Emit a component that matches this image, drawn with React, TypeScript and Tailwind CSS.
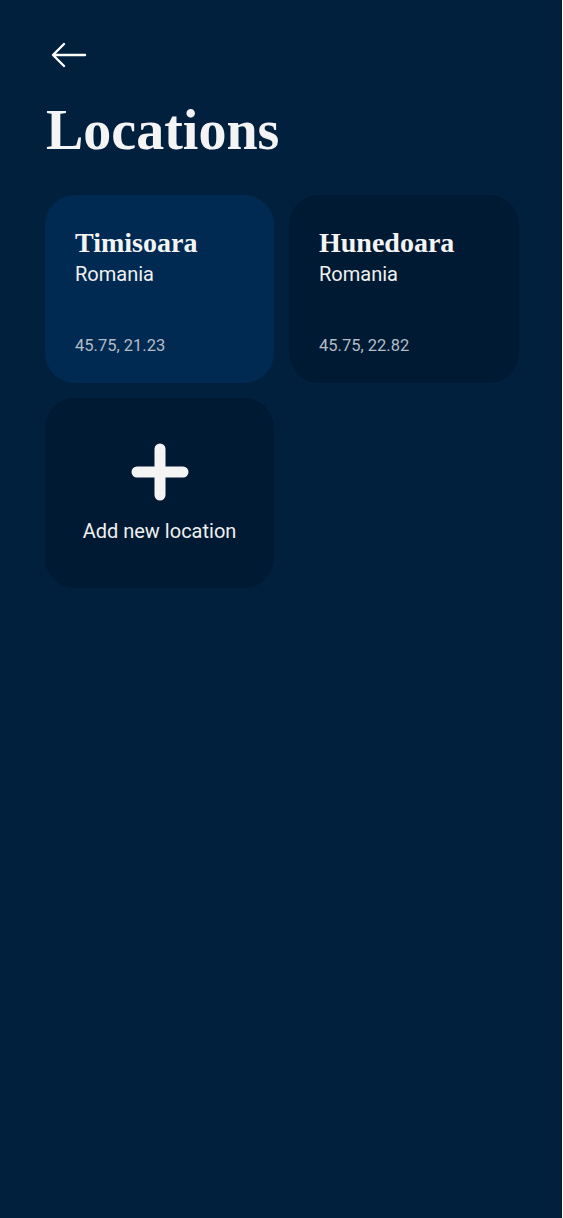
import React from "react";

type Place = {
  city: string;
  country: string;
  coords: string;
  active?: boolean;
};

const places: Place[] = [
  { city: "Timisoara", country: "Romania", coords: "45.75, 21.23", active: true },
  { city: "Hunedoara", country: "Romania", coords: "45.75, 22.82" },
];

const serif = "font-['Liberation_Serif',serif]";
const sans = "font-['Roboto','Noto_Sans',sans-serif]";

function BackArrow() {
  return (
    <svg width="36" height="26" viewBox="0 0 36 26" fill="none">
      <path
        d="M34 13H3M13 2L2 13l11 11"
        stroke="#ffffff"
        strokeWidth="2.4"
        strokeLinecap="round"
        strokeLinejoin="round"
      />
    </svg>
  );
}

function PlaceCard({ place }: { place: Place }) {
  return (
    <div
      className={
        "h-[188px] rounded-[30px] px-[30px] pt-[31px] pb-[27px] flex flex-col " +
        (place.active ? "bg-[#002a52]" : "bg-[#001a33]")
      }
    >
      <div className={`${serif} font-bold text-[28px] leading-[34px] text-[#f4f4f4]`}>
        {place.city}
      </div>
      <div className={`${sans} mt-[2px] text-[20px] leading-[24px] text-[#f0f0f0]`}>
        {place.country}
      </div>
      <div className={`${sans} mt-auto text-[16.5px] leading-[20px] text-[#b4bcc6]`}>
        {place.coords}
      </div>
    </div>
  );
}

export default function App() {
  return (
    <div className="w-[562px] min-h-[1218px] bg-[#00203e] px-[45px] pt-[42px]">
      <div className="pl-[6px]">
        <BackArrow />
      </div>
      <h1
        className={`${serif} font-bold text-[56px] leading-[60px] text-[#f4f4f4] mt-[32px] pl-[1px]`}
      >
        Locations
      </h1>
      <div className="grid grid-cols-[229px_230px] gap-x-[15px] gap-y-[15px] mt-[35px]">
        {places.map((p) => (
          <PlaceCard key={p.city} place={p} />
        ))}
        <div className="h-[190px] rounded-[30px] bg-[#001a33] flex flex-col items-center pt-[45px]">
          <svg width="58" height="58" viewBox="0 0 58 58">
            <path
              d="M29 6v46M6 29h46"
              stroke="#f4f4f4"
              strokeWidth="11"
              strokeLinecap="round"
            />
          </svg>
          <div className={`${sans} mt-[18px] text-[20px] leading-[24px] text-[#f0f0f0]`}>
            Add new location
          </div>
        </div>
      </div>
    </div>
  );
}
